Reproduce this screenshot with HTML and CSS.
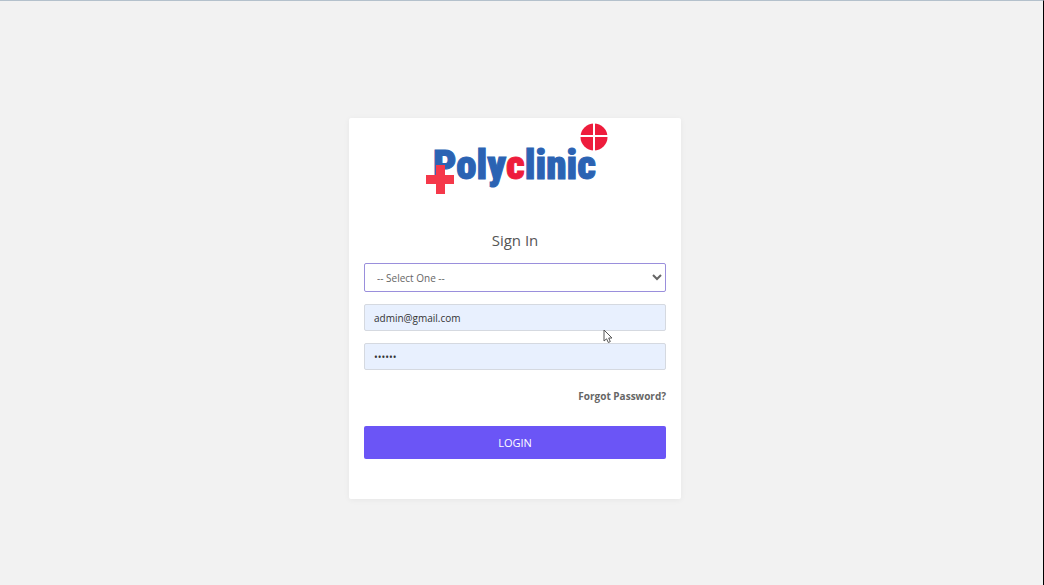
FILE: index.html
```html
<!DOCTYPE html>
<html lang="en">
<head>
<meta charset="utf-8">
<meta name="viewport" content="width=device-width, initial-scale=1">
<title>Polyclinic - Sign In</title>
<link rel="stylesheet" href="styles.css">
</head>
<body>
<main class="page">
  <section class="card">
    <svg class="logo" viewBox="0 0 184 76" role="img" aria-label="Polyclinic">
      <text class="logo-text" x="8" y="57">Poly<tspan class="logo-accent">c</tspan>linic</text>
      <path class="logo-cross" d="M11 43h9v10h9v9h-9v10h-9V62H1v-9h10z"/>
      <circle class="logo-halo" cx="169" cy="15" r="15"/>
      <circle class="logo-badge" cx="169" cy="15" r="13.5"/>
      <path class="logo-lines" d="M169 0v30M154 14h30"/>
    </svg>
    <h1 class="title">Sign In</h1>
    <form class="form">
      <select class="field role" aria-label="Role">
        <option>-- Select One --</option>
      </select>
      <input class="field" type="email" value="admin@gmail.com" aria-label="Email">
      <input class="field password" type="password" value="123456" aria-label="Password">
      <a class="forgot" href="#">Forgot Password?</a>
      <button class="login" type="submit">LOGIN</button>
    </form>
  </section>
</main>
<svg class="cursor" viewBox="0 0 10 15" aria-hidden="true">
  <path d="M1 1v11l2.600-2.200L5.300 13.500l2-.9L5.700 9H9z"/>
</svg>
</body>
</html>
```
FILE: styles.css
```css
* {
  box-sizing: border-box;
}

body {
  margin: 0;
  font-family: "Open Sans", sans-serif;
  font-size: 11px;
  color: #555;
  background: #f2f2f2;
}

.page {
  display: flex;
  justify-content: center;
  align-items: flex-start;
  min-height: 100vh;
  padding: 117px 13px 24px 0;
  border-top: 1px solid #b4c1cc;
  border-right: 1px solid #000;
}

.card {
  display: flex;
  flex-direction: column;
  align-items: center;
  width: 100%;
  max-width: 332px;
  padding: 4px 15px 40px;
  background: #fff;
  border-radius: 2px;
  box-shadow: 0 1px 6px rgba(0, 0, 0, 0.05);
}

.logo {
  width: 184px;
  height: 76px;
  margin-left: 4px;
}

.logo-text {
  font-family: Impact, "Roboto Condensed", Roboto, sans-serif;
  font-size: 41px;
  font-weight: 900;
  fill: #2b63b3;
  stroke: #2b63b3;
  stroke-width: 1px;
}

.logo-accent {
  fill: #ee1c3c;
  stroke: #ee1c3c;
}

.logo-halo {
  fill: #fff;
}

.logo-cross {
  fill: #f5384a;
}

.logo-badge {
  fill: #ee1c3c;
}

.logo-lines {
  stroke: #fff;
  stroke-width: 2px;
}

.title {
  margin: 32px 0 13px;
  font-size: 15px;
  font-weight: 400;
  line-height: 20px;
}

.form {
  display: flex;
  flex-direction: column;
  width: 100%;
}

.field {
  width: 100%;
  height: 27px;
  margin: 0 0 12px;
  padding: 0 9px;
  font: inherit;
  font-size: 10px;
  color: #333;
  background: #e8f0fe;
  border: 1px solid #d5d9e0;
  border-radius: 2px;
  outline: none;
}

.role {
  height: 29px;
  padding: 0 0 0 8px;
  color: #666;
  background: #fff;
  border-color: #9a8fdc;
}

.forgot {
  align-self: flex-end;
  margin: 7px 0 22px;
  font-size: 10px;
  font-weight: 700;
  line-height: 15px;
  color: #666;
  text-decoration: none;
}

.login {
  height: 33px;
  font: inherit;
  color: #fff;
  background: #6b55f6;
  border: 0;
  border-radius: 2px;
}

.cursor {
  position: absolute;
  top: 329px;
  left: 603px;
  width: 10px;
  height: 15px;
  fill: #fff;
  stroke: #555;
}
```
